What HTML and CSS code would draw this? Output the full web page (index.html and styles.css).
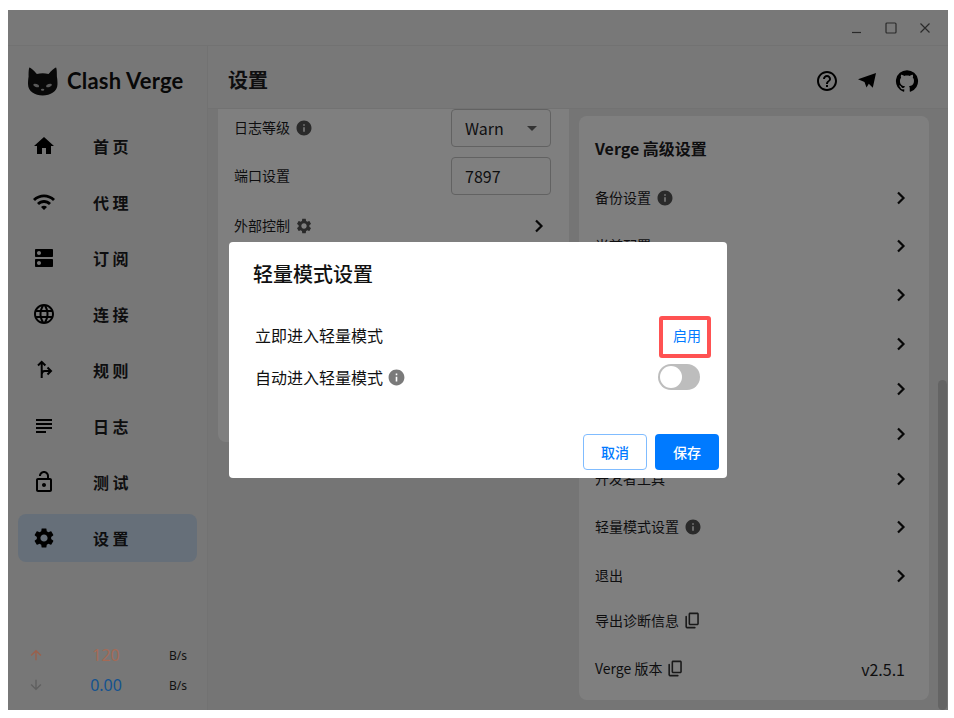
FILE: index.html
```html
<!DOCTYPE html>
<html lang="zh-CN">
<head>
<meta charset="utf-8">
<title>Clash Verge</title>
<link rel="stylesheet" href="styles.css">
</head>
<body>
<div class="window">
  <div class="titlebar">
    <svg class="win-icon" viewBox="0 0 12 12"><path d="M1 10.500h9"/></svg>
    <svg class="win-icon" viewBox="0 0 12 12"><rect x="1" y="1" width="10" height="10" rx="1"/></svg>
    <svg class="win-icon" viewBox="0 0 12 12"><path d="M1.500 1.500l9 9M10.500 1.500l-9 9"/></svg>
  </div>
  <div class="body">
    <aside class="sidebar">
      <div class="logo">
        <svg class="cat" viewBox="0 0 30 29"><path d="M1.500 .5C.8 1 .5 5 .6 9.500.2 12 0 14 0 17c0 7.500 7 11.500 14.700 11.500S29.500 24.500 29.500 17c0-3-.2-5-.6-7.500C29 5 28.700 1 28 .5c-1.500.5-5 3.500-7.500 6.500-1.800-.5-3.800-.7-5.800-.7s-4 .2-5.800.7C6.500 4 3 1 1.500 .5z"/><ellipse class="cat-eye" cx="8.200" cy="18.500" rx="3" ry="1.500" transform="rotate(18 8.200 18.500)"/><ellipse class="cat-eye" cx="21" cy="18.500" rx="3" ry="1.500" transform="rotate(-18 21 18.500)"/><ellipse class="cat-eye" cx="14.600" cy="22.800" rx="1.700" ry="1"/></svg>
        <span class="logo-text">Clash Verge</span>
      </div>
      <nav class="nav">
        <div class="nav-item"><svg class="nav-icon" viewBox="0 0 24 24"><path d="M10 20v-6h4v6h5v-8h3L12 3 2 12h3v8z"/></svg><span class="nav-label">首页</span></div>
        <div class="nav-item"><svg class="nav-icon" viewBox="0 0 24 24"><path d="M1 9l2 2c4.970-4.970 13.030-4.970 18 0l2-2C16.930 2.930 7.080 2.930 1 9zm8 8 3 3 3-3c-1.650-1.660-4.340-1.660-6 0zm-4-4 2 2c2.760-2.760 7.240-2.760 10 0l2-2C15.140 9.140 8.870 9.140 5 13z"/></svg><span class="nav-label">代理</span></div>
        <div class="nav-item"><svg class="nav-icon" viewBox="0 0 24 24"><path d="M20 13H4c-.55 0-1 .45-1 1v6c0 .55.45 1 1 1h16c.55 0 1-.45 1-1v-6c0-.55-.45-1-1-1zM7 19c-1.100 0-2-.9-2-2s.9-2 2-2 2 .9 2 2-.9 2-2 2zM20 3H4c-.55 0-1 .45-1 1v6c0 .55.45 1 1 1h16c.55 0 1-.45 1-1V4c0-.55-.45-1-1-1zM7 9c-1.100 0-2-.9-2-2s.9-2 2-2 2 .9 2 2-.9 2-2 2z"/></svg><span class="nav-label">订阅</span></div>
        <div class="nav-item"><svg class="nav-icon" viewBox="0 0 24 24"><path d="M11.990 2C6.470 2 2 6.480 2 12s4.470 10 9.990 10C17.520 22 22 17.520 22 12S17.520 2 11.990 2zm6.930 6h-2.950c-.32-1.250-.78-2.450-1.380-3.560 1.840.63 3.370 1.910 4.330 3.560zM12 4.040c.83 1.200 1.480 2.530 1.910 3.960h-3.820c.43-1.430 1.080-2.760 1.910-3.960zM4.260 14C4.100 13.360 4 12.690 4 12s.1-1.360.26-2h3.380c-.08.66-.14 1.320-.14 2s.06 1.340.14 2H4.260zm.82 2h2.950c.32 1.250.78 2.450 1.380 3.560-1.840-.63-3.370-1.900-4.330-3.560zm2.950-8H5.080c.96-1.660 2.490-2.930 4.330-3.560C8.810 5.550 8.350 6.750 8.030 8zM12 19.960c-.83-1.200-1.480-2.530-1.910-3.960h3.820c-.43 1.430-1.080 2.760-1.910 3.960zM14.340 14H9.660c-.09-.66-.16-1.320-.16-2s.07-1.350.16-2h4.680c.09.65.16 1.320.16 2s-.07 1.340-.16 2zm.25 5.560c.6-1.110 1.060-2.310 1.380-3.560h2.950c-.96 1.650-2.490 2.930-4.330 3.560zM16.360 14c.08-.66.14-1.320.14-2s-.06-1.340-.14-2h3.380c.16.64.26 1.310.26 2s-.1 1.360-.26 2h-3.380z"/></svg><span class="nav-label">连接</span></div>
        <div class="nav-item"><svg class="nav-icon nav-stroke" viewBox="0 0 24 24"><path d="M9.700 20V4M6 7.500L9.700 3.800l3.700 3.700M9.700 16.500c0-2.500 1-3.500 3-3.500h6M15.500 9.500L19 13l-3.500 3.500"/></svg><span class="nav-label">规则</span></div>
        <div class="nav-item"><svg class="nav-icon" viewBox="0 0 24 24"><path d="M14 17H4v2h10v-2zm6-8H4v2h16V9zM4 15h16v-2H4v2zM4 5v2h16V5H4z"/></svg><span class="nav-label">日志</span></div>
        <div class="nav-item"><svg class="nav-icon" viewBox="0 0 24 24"><path d="M12 17c1.100 0 2-.9 2-2s-.9-2-2-2-2 .9-2 2 .9 2 2 2zm6-9h-1V6c0-2.760-2.240-5-5-5S7 3.240 7 6h2c0-1.660 1.340-3 3-3s3 1.340 3 3v2H6c-1.100 0-2 .9-2 2v10c0 1.100.9 2 2 2h12c1.100 0 2-.9 2-2V10c0-1.100-.9-2-2-2zm0 12H6V10h12v10z"/></svg><span class="nav-label">测试</span></div>
        <div class="nav-item active"><svg class="nav-icon" viewBox="0 0 24 24"><path d="M19.140 12.940c.04-.3.06-.61.06-.94 0-.32-.02-.64-.07-.94l2.030-1.580c.18-.14.23-.41.12-.61l-1.920-3.320c-.12-.22-.37-.29-.59-.22l-2.390.96c-.5-.38-1.030-.7-1.620-.94l-.36-2.540c-.04-.24-.24-.41-.48-.41h-3.840c-.24 0-.43.17-.47.41l-.36 2.540c-.59.24-1.130.57-1.620.94l-2.390-.96c-.22-.08-.47 0-.59.22L2.740 8.870c-.12.21-.08.47.12.61l2.030 1.580c-.05.3-.09.63-.09.94s.02.64.07.94l-2.030 1.580c-.18.14-.23.41-.12.61l1.920 3.320c.12.22.37.29.59.22l2.390-.96c.5.38 1.030.7 1.620.94l.36 2.540c.05.24.24.41.48.41h3.840c.24 0 .44-.17.47-.41l.36-2.540c.59-.24 1.130-.56 1.620-.94l2.390.96c.22.08.47 0 .59-.22l1.920-3.320c.12-.22.07-.47-.12-.61l-2.010-1.580zM12 15.600c-1.980 0-3.600-1.620-3.600-3.600s1.620-3.600 3.600-3.600 3.600 1.620 3.600 3.600-1.620 3.600-3.600 3.600z"/></svg><span class="nav-label">设置</span></div>
      </nav>
      <div class="traffic">
        <div class="traffic-row"><svg class="traffic-arrow up" viewBox="0 0 24 24"><path d="M4 12l1.410 1.410L11 7.830V20h2V7.830l5.580 5.590L20 12l-8-8-8 8z"/></svg><span class="traffic-value up">120</span><span class="traffic-unit">B/s</span></div>
        <div class="traffic-row"><svg class="traffic-arrow down" viewBox="0 0 24 24"><path d="M20 12l-1.410-1.410L13 16.170V4h-2v12.170l-5.580-5.590L4 12l8 8 8-8z"/></svg><span class="traffic-value down">0.00</span><span class="traffic-unit">B/s</span></div>
      </div>
    </aside>
    <main class="main">
      <header class="page-header">
        <h1 class="page-title">设置</h1>
        <div class="header-actions">
          <svg class="head-icon" viewBox="0 0 24 24"><path d="M11 18h2v-2h-2v2zm1-16C6.480 2 2 6.480 2 12s4.480 10 10 10 10-4.480 10-10S17.520 2 12 2zm0 18c-4.410 0-8-3.590-8-8s3.590-8 8-8 8 3.590 8 8-3.590 8-8 8zm0-14c-2.210 0-4 1.790-4 4h2c0-1.100.9-2 2-2s2 .9 2 2c0 2-3 1.750-3 5h2c0-2.250 3-2.500 3-5 0-2.210-1.790-4-4-4z"/></svg>
          <svg class="head-icon" viewBox="0 0 24 24"><path d="M21 4L3 10.300l6.500 2.700 2 5.500 2.300-3.700 4 4z"/></svg>
          <svg class="head-icon" viewBox="0 0 24 24"><path d="M12 1.270a11 11 0 00-3.480 21.460c.55.09.73-.28.73-.55v-1.840c-3.030.64-3.670-1.460-3.670-1.460-.55-1.290-1.280-1.650-1.280-1.650-.92-.65.1-.65.1-.65 1.100 0 1.730 1.100 1.730 1.100.92 1.650 2.570 1.200 3.210.92a2 2 0 01.64-1.470c-2.470-.27-5.040-1.190-5.040-5.500 0-1.100.46-2.100 1.200-2.840a3.760 3.760 0 010-2.930s.91-.28 3.110 1.100c1.800-.49 3.700-.49 5.500 0 2.100-1.380 3.020-1.100 3.020-1.100a3.760 3.760 0 010 2.930c.83.74 1.200 1.740 1.200 2.940 0 4.210-2.570 5.130-5.040 5.400.45.37.82.92.82 2.020v3.030c0 .27.1.64.73.55A11 11 0 0012 1.270"/></svg>
        </div>
      </header>
      <div class="content">
        <section class="card card-left">
          <div class="row-left"><span class="label">日志等级</span><svg class="mini-icon" viewBox="0 0 24 24"><path d="M12 2C6.480 2 2 6.480 2 12s4.480 10 10 10 10-4.480 10-10S17.520 2 12 2zm1 15h-2v-6h2v6zm0-8h-2V7h2v2z"/></svg><div class="field"><span>Warn</span><span class="caret"></span></div></div>
          <div class="row-left"><span class="label">端口设置</span><div class="field"><span>7897</span></div></div>
          <div class="row-left third"><span class="label">外部控制</span><svg class="mini-icon" viewBox="0 0 24 24"><path d="M19.140 12.940c.04-.3.06-.61.06-.94 0-.32-.02-.64-.07-.94l2.030-1.580c.18-.14.23-.41.12-.61l-1.920-3.320c-.12-.22-.37-.29-.59-.22l-2.390.96c-.5-.38-1.030-.7-1.620-.94l-.36-2.540c-.04-.24-.24-.41-.48-.41h-3.840c-.24 0-.43.17-.47.41l-.36 2.540c-.59.24-1.130.57-1.620.94l-2.390-.96c-.22-.08-.47 0-.59.22L2.740 8.870c-.12.21-.08.47.12.61l2.030 1.580c-.05.3-.09.63-.09.94s.02.64.07.94l-2.030 1.580c-.18.14-.23.41-.12.61l1.920 3.320c.12.22.37.29.59.22l2.390-.96c.5.38 1.030.7 1.620.94l.36 2.540c.05.24.24.41.48.41h3.840c.24 0 .44-.17.47-.41l.36-2.540c.59-.24 1.130-.56 1.620-.94l2.390.96c.22.08.47 0 .59-.22l1.920-3.320c.12-.22.07-.47-.12-.61l-2.010-1.580zM12 15.600c-1.980 0-3.600-1.620-3.600-3.600s1.620-3.600 3.600-3.600 3.600 1.620 3.600 3.600-1.620 3.600-3.600 3.600z"/></svg><svg class="chev" viewBox="0 0 24 24"><path d="M9 6.500l5.500 5.500L9 17.500"/></svg></div>
        </section>
        <section class="card card-right">
          <h2 class="card-title">Verge 高级设置</h2>
          <div class="row"><span class="label">备份设置</span><svg class="mini-icon" viewBox="0 0 24 24"><path d="M12 2C6.480 2 2 6.480 2 12s4.480 10 10 10 10-4.480 10-10S17.520 2 12 2zm1 15h-2v-6h2v6zm0-8h-2V7h2v2z"/></svg><svg class="chev" viewBox="0 0 24 24"><path d="M9 6.500l5.500 5.500L9 17.500"/></svg></div>
          <div class="row gap3"><span class="label">当前配置</span><svg class="chev" viewBox="0 0 24 24"><path d="M9 6.500l5.500 5.500L9 17.500"/></svg></div>
          <div class="row gap4"><span class="label">配置目录</span><svg class="chev" viewBox="0 0 24 24"><path d="M9 6.500l5.500 5.500L9 17.500"/></svg></div>
          <div class="row gap4"><span class="label">内核目录</span><svg class="chev" viewBox="0 0 24 24"><path d="M9 6.500l5.500 5.500L9 17.500"/></svg></div>
          <div class="row"><span class="label">日志目录</span><svg class="chev" viewBox="0 0 24 24"><path d="M9 6.500l5.500 5.500L9 17.500"/></svg></div>
          <div class="row"><span class="label">检查更新</span><svg class="chev" viewBox="0 0 24 24"><path d="M9 6.500l5.500 5.500L9 17.500"/></svg></div>
          <div class="row"><span class="label">开发者工具</span><svg class="chev" viewBox="0 0 24 24"><path d="M9 6.500l5.500 5.500L9 17.500"/></svg></div>
          <div class="row gap3"><span class="label">轻量模式设置</span><svg class="mini-icon" viewBox="0 0 24 24"><path d="M12 2C6.480 2 2 6.480 2 12s4.480 10 10 10 10-4.480 10-10S17.520 2 12 2zm1 15h-2v-6h2v6zm0-8h-2V7h2v2z"/></svg><svg class="chev" viewBox="0 0 24 24"><path d="M9 6.500l5.500 5.500L9 17.500"/></svg></div>
          <div class="row gap4"><span class="label">退出</span><svg class="chev" viewBox="0 0 24 24"><path d="M9 6.500l5.500 5.500L9 17.500"/></svg></div>
          <div class="row"><span class="label">导出诊断信息</span><svg class="copy-icon" viewBox="0 0 24 24"><path d="M15 20H5V7c0-.55-.45-1-1-1s-1 .45-1 1v13c0 1.100.9 2 2 2h10c.55 0 1-.45 1-1s-.45-1-1-1zm5-4V4c0-1.100-.9-2-2-2H9c-1.100 0-2 .9-2 2v12c0 1.100.9 2 2 2h9c1.100 0 2-.9 2-2zm-2 0H9V4h9v12z"/></svg></div>
          <div class="row gap3"><span class="label">Verge 版本</span><svg class="copy-icon" viewBox="0 0 24 24"><path d="M15 20H5V7c0-.55-.45-1-1-1s-1 .45-1 1v13c0 1.100.9 2 2 2h10c.55 0 1-.45 1-1s-.45-1-1-1zm5-4V4c0-1.100-.9-2-2-2H9c-1.100 0-2 .9-2 2v12c0 1.100.9 2 2 2h9c1.100 0 2-.9 2-2zm-2 0H9V4h9v12z"/></svg><span class="version">v2.5.1</span></div>
        </section>
      </div>
    </main>
  </div>
  <div class="scroll-thumb"></div>
  <div class="overlay">
    <div class="dialog">
      <h3 class="dialog-title">轻量模式设置</h3>
      <div class="dialog-row first"><span class="dialog-label">立即进入轻量模式</span><button class="enable-btn">启用</button></div>
      <div class="dialog-row second"><span>自动进入轻量模式</span><svg class="dialog-info" viewBox="0 0 24 24"><path d="M12 2C6.480 2 2 6.480 2 12s4.480 10 10 10 10-4.480 10-10S17.520 2 12 2zm1 15h-2v-6h2v6zm0-8h-2V7h2v2z"/></svg><span class="switch"><span class="knob"></span></span></div>
      <div class="dialog-footer"><button class="btn btn-outline">取消</button><button class="btn btn-solid">保存</button></div>
    </div>
  </div>
</div>
</body>
</html>
```

FILE: styles.css
```css
* { box-sizing: border-box; }
html, body { margin: 0; height: 100%; background: #fff; }
body {
  padding: 10px 6px 8px 8px;
  font-family: "Noto Sans CJK SC", "Noto Sans", sans-serif;
  color: #1d1d1f;
  overflow: hidden;
}
.window {
  position: relative;
  width: 940px;
  height: 700px;
  display: flex;
  flex-direction: column;
  background: #f1f1f1;
  overflow: hidden;
}
.titlebar {
  height: 36px;
  flex: none;
  display: flex;
  justify-content: flex-end;
  align-items: flex-start;
  gap: 22px;
  padding: 12px 17px 0 0;
  border-bottom: 1px solid #e4e4e4;
}
.win-icon { width: 12px; height: 12px; fill: none; stroke: #555; stroke-width: 1.200; }
.body { flex: 1; min-height: 0; display: flex; }
.sidebar {
  width: 200px;
  flex: none;
  display: flex;
  flex-direction: column;
  background: #efefef;
  border-right: 1px solid #e4e4e4;
}
.logo { height: 76px; flex: none; display: flex; align-items: center; gap: 9px; padding: 0 0 6px 20px; }
.cat { width: 30px; height: 29px; fill: #111; flex: none; }
.cat-eye { fill: #b5b5b5; }
.logo-text { font-family: Lato, sans-serif; font-weight: 700; font-size: 22px; letter-spacing: .2px; color: #111; margin-bottom: 2px; }
.nav { display: flex; flex-direction: column; gap: 8px; padding: 0 10px; }
.nav-item { height: 48px; display: flex; align-items: center; padding-left: 14px; border-radius: 8px; }
.nav-item.active { background: #ccdef2; }
.nav-icon { width: 24px; height: 24px; flex: none; fill: #000; }
.nav-stroke { fill: none; stroke: #000; stroke-width: 2; }
.nav-label { margin-left: 37px; font-size: 16px; font-weight: 700; letter-spacing: 3.500px; }
.traffic { margin-top: auto; padding: 0 20px 10px 20px; display: flex; flex-direction: column; }
.traffic-row { height: 30px; display: flex; align-items: center; position: relative; z-index: 2; font-family: "Noto Sans", sans-serif; }
.traffic-arrow { width: 16px; height: 16px; flex: none; }
.traffic-arrow.up { fill: #9c5f4a; }
.traffic-arrow.down { fill: #5f5f5f; }
.traffic-value { flex: 1; text-align: center; font-size: 16px; padding: 0 6px 0 5px; }
.traffic-value.up { color: #a56a55; }
.traffic-value.down { color: #13528f; }
.traffic-unit { width: 19px; margin-right: -1px; font-size: 12px; color: #111; }
.main { flex: 1; min-width: 0; display: flex; flex-direction: column; }
.page-header {
  height: 63px;
  flex: none;
  display: flex;
  align-items: center;
  justify-content: space-between;
  padding: 8px 29px 0 20px;
  border-bottom: 1px solid #e4e4e4;
}
.page-title { margin: 0 0 4px; font-size: 20px; font-weight: 700; }
.header-actions { display: flex; gap: 16px; align-items: center; }
.head-icon { width: 24px; height: 24px; fill: #000; }
.content { flex: 1; min-height: 0; display: flex; gap: 10px; padding: 0 19px 0 10px; background: #eaeaea; align-items: flex-start; overflow: hidden; }
.card { background: #fff; min-width: 0; flex: none; }
.card-left { width: 351px; height: 333px; padding: 0 18px 0 16px; border-radius: 0 0 8px 8px; }
.card-right { width: 350px; margin-top: 7px; padding: 20px 16px 9px; border-radius: 8px; }
.card-title { margin: 0 0 15px; font-size: 16px; line-height: 24px; font-weight: 700; }
.row-left { height: 48px; display: flex; align-items: center; padding-bottom: 10px; }
.row-left.third { margin-top: 2px; }
.row { height: 45px; display: flex; align-items: center; }
.gap3 { margin-top: 3px; }
.gap4 { margin-top: 4px; }
.label { font-size: 14px; line-height: 20px; padding-bottom: 2px; }
.mini-icon { width: 18px; height: 18px; margin-left: 5px; fill: #555; flex: none; }
.copy-icon { width: 19px; height: 19px; margin-left: 4px; fill: #333; flex: none; }
.field {
  margin-left: auto;
  width: 100px;
  height: 38px;
  border: 1px solid #c4c4c4;
  border-radius: 4px;
  display: flex;
  align-items: center;
  justify-content: space-between;
  padding: 0 13px;
  font-size: 16px;
}
.caret { width: 0; height: 0; border: 5px solid transparent; border-top-color: #666; border-bottom: 0; }
.chev { width: 24px; height: 24px; margin-left: auto; fill: none; stroke: #111; stroke-width: 2.200; flex: none; }
.version { margin-left: auto; font-size: 16px; margin-right: 8px; }
.scroll-thumb { position: absolute; right: 1px; bottom: 0; width: 9px; height: 330px; background: #c8c8c8; border-radius: 5px; }
.overlay { position: absolute; inset: 0; z-index: 1; background: rgba(0,0,0,.5); display: flex; align-items: center; justify-content: center; }
.dialog { width: 498px; height: 236px; background: #fff; border-radius: 4px; display: flex; flex-direction: column; padding: 16px 8px 8px 24px; }
.dialog-title { margin: 0; font-size: 20px; line-height: 32px; font-weight: 500; color: #111; }
.dialog-row { display: flex; align-items: center; padding-left: 2px; font-size: 16px; color: #111; }
.dialog-row.first { margin-top: 26px; justify-content: space-between; padding-right: 8px; }
.dialog-label { padding-bottom: 4px; }
.dialog-row.second { margin-top: 6px; height: 26px; padding-right: 19px; }
.enable-btn {
  width: 52px;
  height: 42px;
  padding: 0 2px 4px 6px;
  border: 4px solid #ff5252;
  border-radius: 3px;
  background: #fff;
  color: #007aff;
  font: 400 14px "Noto Sans CJK SC", sans-serif;
}
.dialog-info { width: 19px; height: 19px; margin-left: 4px; fill: #7a7a7a; flex: none; }
.switch { margin-left: auto; position: relative; width: 42px; height: 26px; background: #bdbdbd; border-radius: 13px; flex: none; }
.knob { position: absolute; left: 2px; top: 2px; width: 22px; height: 22px; border-radius: 50%; background: #fff; }
.dialog-footer { margin-top: auto; display: flex; justify-content: flex-end; gap: 8px; }
.btn { width: 64px; height: 36px; border-radius: 4px; font: 500 14px "Noto Sans CJK SC", sans-serif; padding: 0; }
.btn-outline { background: #fff; color: #007aff; border: 1px solid #80bcff; }
.btn-solid { background: #007aff; color: #fff; border: 0; }
```
